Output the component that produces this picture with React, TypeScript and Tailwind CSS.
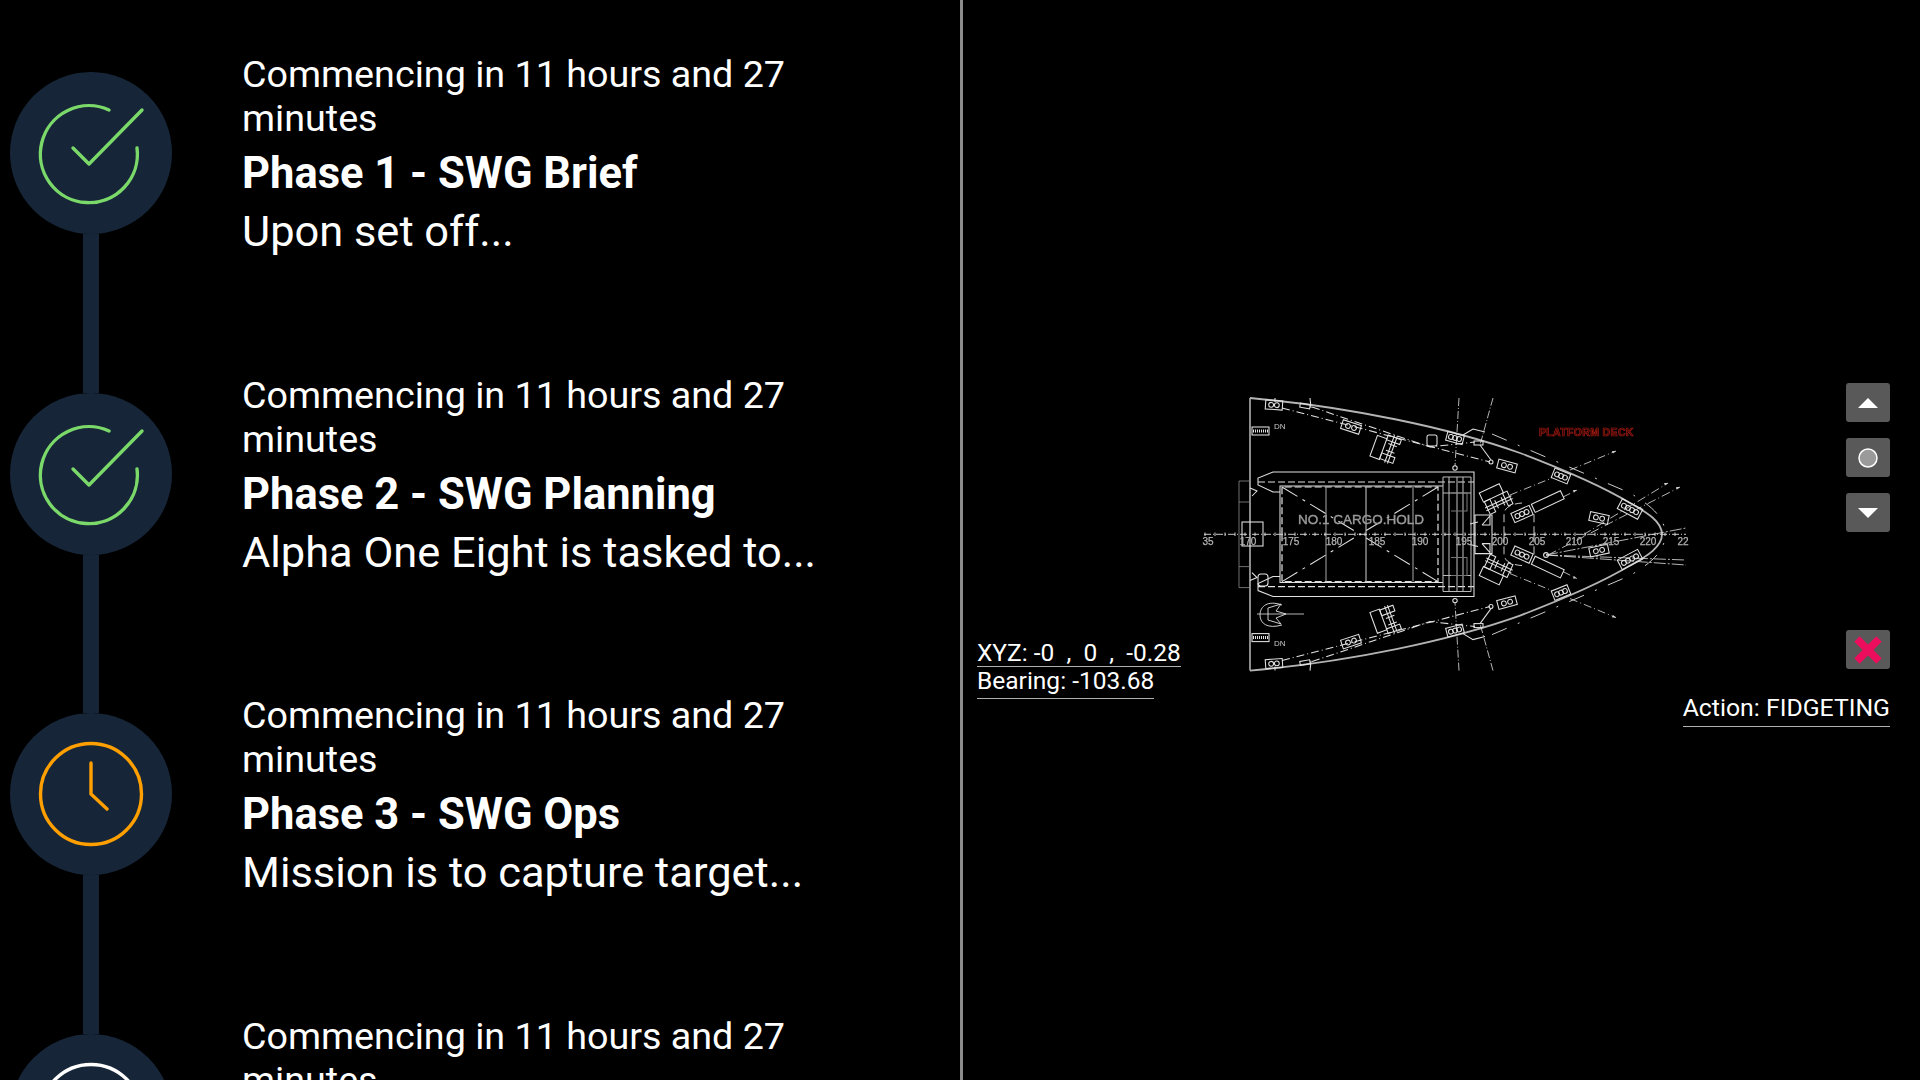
import React from 'react';

// the fourth row runs off the bottom of the screen, only its first lines show
const phases = [
  { title: 'Phase 1 - SWG Brief', body: 'Upon set off...', status: 'done' },
  { title: 'Phase 2 - SWG Planning', body: 'Alpha One Eight is tasked to...', status: 'done' },
  { title: 'Phase 3 - SWG Ops', body: 'Mission is to capture target...', status: 'active' },
  { title: '', body: '', status: 'pending' },
];

function StatusIcon({ status }: { status: string }) {
  return (
    <svg width="162" height="162" viewBox="0 0 162 162" fill="none" strokeWidth="3.4" strokeLinecap="round" strokeLinejoin="round">
      {status === 'done' && (
        <g stroke="#7bd96a">
          <path d="M99 38A48.5 48.5 0 1 0 127 76" />
          <path d="M63 76L79 92L132 38" />
        </g>
      )}
      {status === 'active' && (
        <g stroke="#ff9f00">
          <circle cx="81" cy="81" r="50.5" />
          <path d="M81 50V81L97 96" />
        </g>
      )}
      {status === 'pending' && <circle cx="81" cy="81" r="50.5" stroke="#ffffff" />}
    </svg>
  );
}

// rotated fitting: a box with two bollard circles
function Fitting({ x, y, w, h, r, n = 2 }: { x: number; y: number; w: number; h: number; r: number; n?: number }) {
  const step = w / (n + 1);
  return (
    <g transform={`translate(${x} ${y}) rotate(${r})`}>
      <rect x={-w / 2} y={-h / 2} width={w} height={h} />
      {Array.from({ length: n }).map((_, i) => (
        <circle key={i} cx={-w / 2 + step * (i + 1)} cy={0} r={Math.min(2.4, h / 3.4)} />
      ))}
    </g>
  );
}

function Winch({ x, y, r }: { x: number; y: number; r: number }) {
  return (
    <g transform={`translate(${x} ${y}) rotate(${r})`}>
      <rect x={-12} y={-8} width={10} height={22} />
      <rect x={-2} y={7} width={14} height={6} />
      <rect x={-2} y={-12} width={14} height={5} />
      <path d="M4 -14V15M7 -14V15M1 -4H10M1 3H10" />
    </g>
  );
}

function DeckHalf() {
  return (
    <g>
      {/* hull */}
      <path stroke="#b4b4b4" strokeWidth="1.8" d="M1250 398C1350 407 1450 428 1520 453C1570 472 1605 488 1630 503C1648 513 1662 522 1662 534.3" />
      <path stroke="#b0b0b0" strokeWidth="1.6" d="M1250 534.3V398" />
      {/* hold outline */}
      <path d="M1474 534.3V472H1273L1258 478V485L1273 492H1280" />
      <path strokeWidth="1.2" strokeDasharray="7 3" d="M1258 482H1474" />
      <path d="M1280 534.3V486H1443" />
      <path strokeWidth="1.2" strokeDasharray="7 3" d="M1282 534.3V487H1438V534.3" />
      <path stroke="#a0a0a0" d="M1326 534.3V487M1413 534.3V487" />
      <path strokeWidth="1.2" stroke="#b0b0b0" d="M1366 534.3V487" />
      <path strokeDasharray="18 6 3 6" d="M1282 487L1360 534.3M1438 487L1360 534.3" />
      {/* bulkhead stack */}
      <path stroke="#b8b8b8" d="M1443 534.3V477M1449 534.3V477M1457 534.3V477M1463 534.3V477M1471 534.3V477M1443 477H1471M1443 493H1471" />
      <path stroke="#777777" d="M1451 493H1467V511H1451" />
      <path d="M1475 534.3V515H1492V534.3M1478 522L1470 524M1482 525L1490 516V525H1482" />
      {/* stern */}
      <path stroke="#8a8a8a" strokeWidth="0.8" d="M1250 481H1239V534.3M1239 502H1250" />
      <path d="M1250 488L1257 491L1252 496" />
      <rect x="1252" y="427" width="17" height="8" />
      <path strokeWidth="3" strokeDasharray="1 1" d="M1253 431H1268" />
      <Fitting x={1274} y={405} w={17} h={9} r={4} />
      <path d="M1275 398V402M1310 398L1311 408" />
      <rect x="1300" y="404" width="10" height="4" transform="rotate(10 1305 406)" />
      {/* mooring lines */}
      <path strokeDasharray="8 3 1 3" d="M1282 408L1490 462" />
      <path strokeDasharray="8 3 1 3" d="M1312 407L1430 447L1475 442" />
      <Fitting x={1351} y={427} w={19} h={9} r={18} />
      <Winch x={1386} y={447} r={20} />
      <Fitting x={1455} y={438} w={17} h={9} r={15} n={3} />
      <rect x="1474" y="441" width="9" height="4" />
      <path d="M1463 435L1473 429L1485 432" />
      <path strokeWidth="0.8" strokeDasharray="8 2 1 2" d="M1459 398L1455 466M1493 398L1480 445" />
      <circle cx="1455" cy="468" r="2.2" />
      <path d="M1480 445L1491 460" />
      <circle cx="1491" cy="462" r="2" />
      <Fitting x={1507} y={466} w={19} h={9} r={15} />
      <Fitting x={1561} y={476} w={17} h={10} r={22} n={3} />
      <Fitting x={1630} y={509} w={23} h={11} r={28} n={4} />
      <Winch x={1497} y={498} r={65} />
      <Fitting x={1522} y={514} w={20} h={10} r={-24} n={3} />
      <rect x="1532" y="497" width="32" height="9" transform="rotate(-25 1548 502)" />
      <Fitting x={1599} y={518} w={19} h={9} r={12} />
      {/* outer dash line */}
      <path strokeWidth="0.9" strokeDasharray="16 12 2 12" d="M1492 434L1630 493C1650 505 1660 514 1664 526" />
      <path strokeWidth="0.9" strokeDasharray="8 4" d="M1504 534.3V515C1504 508 1510 504 1522 503M1534 534.3V510" />
      {/* arrows */}
      <path strokeWidth="0.8" strokeDasharray="8 3 1 3" d="M1510 495L1552 478M1570 470L1616 451M1563 497L1577 490" />
      <path fill="#d0d0d0" stroke="none" d="M1616 451L1612 451L1613 453.5ZM1577 490L1573 490L1574 492.5Z" />
    </g>
  );
}

function DeckPlan() {
  const frames = [
    ['35', 1208], ['170', 1248], ['175', 1291], ['180', 1334], ['185', 1377], ['190', 1420], ['195', 1464],
    ['200', 1500], ['205', 1537], ['210', 1574], ['215', 1611], ['220', 1648], ['22', 1683],
  ] as const;
  const ticks = Array.from({ length: 48 }).map((_, i) => 1205 + i * 10);
  return (
    <svg className="block blur-[0.4px]" width="500" height="290" viewBox="1196 390 500 290" fill="none" stroke="#e2e2e2" strokeWidth="1.05">
      <DeckHalf />
      <g transform="translate(0 1068.6) scale(1 -1)">
        <DeckHalf />
      </g>
      <rect x="1427" y="435" width="10" height="11" rx="2" />
      <rect x="1258" y="574" width="10" height="12" rx="3" />
      {/* centre line */}
      <path strokeWidth="0.9" strokeDasharray="7 2 1 2" d="M1204 534.3H1686" />
      <path strokeWidth="0.9" d={ticks.map((t) => `M${t} 532.5V536`).join('')} />
      <rect x="1242" y="522" width="21" height="24" />
      {/* bow fan, only on the port side */}
      <path strokeWidth="0.8" strokeDasharray="9 3 1 3" d="M1583 535L1668 483M1548 555L1680 487" />
      <path fill="#d0d0d0" stroke="none" d="M1668 483L1664 483L1665 485.5ZM1680 487L1676 487L1677 489.5Z" />
      <path strokeWidth="0.8" strokeDasharray="12 2 2 2" d="M1546 555L1686 560M1546 555L1686 565M1546 555L1686 528" />
      <circle cx="1546" cy="555" r="2.4" />
      {/* anchor */}
      <path strokeWidth="0.9" d="M1282 605C1268 600 1260 606 1260 615C1260 624 1268 629 1282 625M1268 608L1281 604L1276 611L1286 614L1276 618L1281 624L1268 620Z" />
      <path strokeWidth="0.8" d="M1257 614H1304" />
      {frames.map(([label, x]) => (
        <text key={label} x={x} y={544.5} textAnchor="middle" fontSize="10" fontFamily="'Liberation Sans', sans-serif" fill="#b4b4b4" stroke="#b4b4b4" strokeWidth="0.25">
          {label}
        </text>
      ))}
      <g fontFamily="'Liberation Sans', sans-serif" stroke="none">
        <text x="1298" y="524" fontSize="13.5" fill="#9a9a9a" stroke="#9a9a9a" strokeWidth="0.4">NO.1 CARGO.HOLD</text>
        <text x="1274" y="429" fontSize="8" fill="#c8c8c8">DN</text>
        <text x="1274" y="646" fontSize="8" fill="#c8c8c8">DN</text>
        <text x="1539" y="436" fontSize="10.5" fontWeight="700" letterSpacing="0.35" fill="#2a0503" stroke="#a81a12" strokeWidth="0.7">PLATFORM DECK</text>
      </g>
    </svg>
  );
}

function ControlButton({ children }: { children: React.ReactNode }) {
  return (
    <button className="flex h-[39px] w-[44px] items-center justify-center rounded-[3px] bg-[#595959]">
      {children}
    </button>
  );
}

export default function App() {
  return (
    <div className="flex h-screen overflow-hidden bg-black font-['Roboto',sans-serif] text-white">
      <div className="w-[960px] shrink-0 pl-[10px] pt-[72px]">
        {phases.map((p, i) => (
          <div key={i} className="flex h-[320.5px] w-[940px]">
            <div className="flex w-[162px] shrink-0 flex-col items-center">
              <div className="h-[162px] w-[162px] shrink-0 rounded-full bg-[#162638]">
                <StatusIcon status={p.status} />
              </div>
              <div className="w-4 flex-1 bg-[#162638]" />
            </div>
            <div className="ml-[70px] -mt-[20px] w-[600px]">
              <p className="text-[37.7px] leading-[44px]">Commencing in 11 hours and 27 minutes</p>
              {p.title && <p className="mt-[10px] text-[43.5px] font-bold leading-[47px]">{p.title}</p>}
              {p.body && <p className="mt-[10px] text-[43.4px] leading-[50px]">{p.body}</p>}
            </div>
          </div>
        ))}
      </div>
      <div className="w-[3px] shrink-0 bg-[#8c8c8c]" />
      <div className="flex flex-1 items-start pl-[14px] pr-[30px] pt-[383px]">
        <div className="mt-[256px] w-[219px] shrink-0 text-[24.5px] leading-[27px]">
          <div className="w-[204px] border-b border-[#b0b0b0] whitespace-pre">XYZ: -0  ,  0  ,  -0.28</div>
          <div className="w-fit border-b border-[#b0b0b0] pb-[4px]">Bearing: -103.68</div>
        </div>
        <div className="mt-[7px] shrink-0">
          <DeckPlan />
        </div>
        <div className="ml-auto flex w-[44px] shrink-0 flex-col items-end">
          <div className="flex flex-col gap-4">
            <ControlButton>
              <svg width="20" height="12" viewBox="0 0 20 12"><path d="M10 1L20 11H0Z" fill="#ffffff" /></svg>
            </ControlButton>
            <ControlButton>
              <svg width="22" height="22" viewBox="0 0 22 22"><circle cx="11" cy="11" r="9" fill="#9a9a9a" stroke="#ffffff" strokeWidth="1.5" /></svg>
            </ControlButton>
            <ControlButton>
              <svg width="20" height="12" viewBox="0 0 20 12"><path d="M10 11L0 1H20Z" fill="#ffffff" /></svg>
            </ControlButton>
          </div>
          <div className="mt-[98px]">
            <ControlButton>
              <svg width="28" height="28" viewBox="0 0 28 28"><path d="M3 3L25 25M25 3L3 25" stroke="#ec0d5c" strokeWidth="7.5" /></svg>
            </ControlButton>
          </div>
          <div className="mt-[24px] whitespace-nowrap border-b border-[#b0b0b0] pb-[4px] text-[24.8px] leading-[29px]">
            Action: FIDGETING
          </div>
        </div>
      </div>
    </div>
  );
}
